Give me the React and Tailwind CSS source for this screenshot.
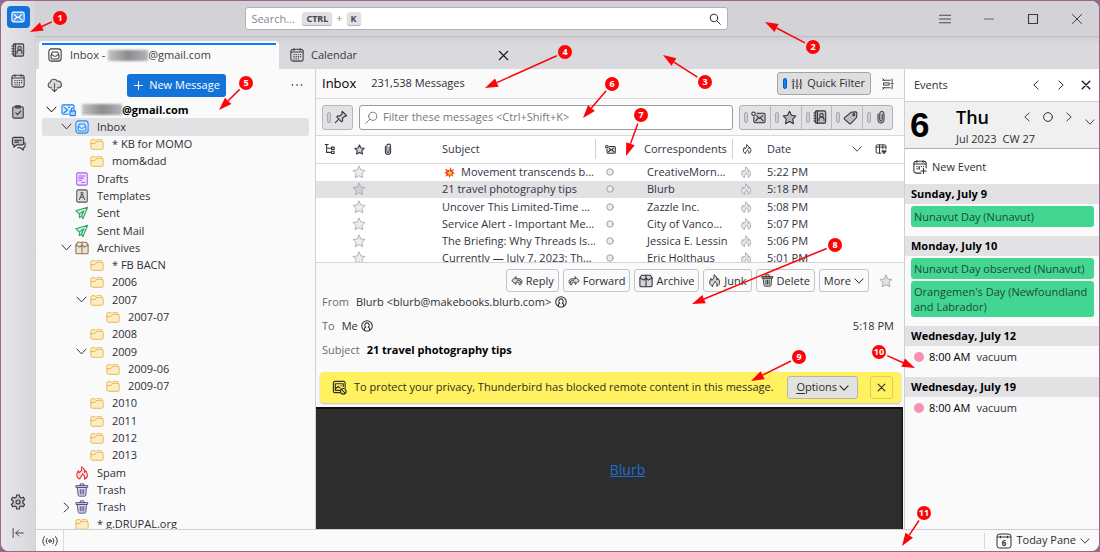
import React from 'react';
import clsx from 'clsx';

const Svg = ({ className = 'size-[14px]', sw = 1, children }) => (
  <svg
    viewBox="0 0 16 16"
    className={clsx('shrink-0', className)}
    fill="none"
    stroke="currentColor"
    strokeWidth={sw}
    strokeLinecap="round"
    strokeLinejoin="round"
    aria-hidden="true"
  >
    {children}
  </svg>
);

const Chevron = ({ dir = 'down', className = 'size-3', sw = 1.4 }) => {
  const paths = {
    down: 'M1.500 4.500L8 11.500l6.500-7',
    right: 'M4.500 1.500L11.500 8l-7 6.500',
    left: 'M11.500 1.500L4.500 8l7 6.500',
  };
  return (
    <Svg className={className} sw={sw}>
      <path d={paths[dir]} />
    </Svg>
  );
};

const Cross = ({ className = 'size-3', sw = 1.6 }) => (
  <Svg className={className} sw={sw}>
    <path d="M2 2l12 12M14 2L2 14" />
  </Svg>
);

const MailIcon = ({ className }) => (
  <Svg className={className} sw={1.3}>
    <rect x="1" y="2.5" width="14" height="11" rx="2" fill="#4a96f0" />
    <path d="M3.5 5l3.7 3.3a1.2 1.2 0 0 0 1.6 0L12.500 5M3.500 11.500L6.500 8.500M12.500 11.500L9.500 8.500" />
  </Svg>
);

const ContactsIcon = ({ className }) => (
  <Svg className={className} sw={1.200}>
    <rect x="2.5" y="1" width="12" height="14" rx="1.5" fill="currentColor" fillOpacity=".18" />
    <path d="M1 3.500h2.500M1 6.500h2.500M1 9.500h2.500M1 12.500h2.500M5 1v14" />
    <circle cx="9.700" cy="6" r="2" />
    <path d="M6.800 12v-1.200a2.900 2.900 0 0 1 5.800 0V12" />
  </Svg>
);

const CalendarIcon = ({ className }) => (
  <Svg className={className} sw={1.200}>
    <rect x="1" y="1.500" width="14" height="13.500" rx="2.500" />
    <path d="M1.500 4.500h13M4.500 .8v2M11.500 .8v2" />
    <path d="M4.500 7.500h.1M7 7.500h.1M9.500 7.500h.1M12 7.500h.1M4.500 10h.1M7 10h.1M9.500 10h.1M12 10h.1M4.500 12.500h.1M7 12.500h.1M9.500 12.500h.1" strokeWidth="1.500" />
  </Svg>
);

const NewEventIcon = () => (
  <Svg sw={1.200}>
    <path d="M9 15H3.500A2.500 2.500 0 0 1 1 12.500V4A2.500 2.500 0 0 1 3.500 1.500h9A2.500 2.500 0 0 1 15 4v5" />
    <path d="M1.500 4.500h13M4.500 .8v2M11.500 .8v2M12 9.500v6M9 12.500h6" />
    <path d="M4.500 7.500h.1M7 7.500v3M9.500 7.500h.1M4.500 10h.1M12 7.500h.1" strokeWidth="1.500" />
  </Svg>
);

const TasksIcon = ({ className }) => (
  <Svg className={className} sw={1.200}>
    <rect x="2" y="2" width="12" height="13" rx="1.500" fill="currentColor" fillOpacity=".22" />
    <path d="M5.500 1h5v2.500h-5z" fill="currentColor" fillOpacity=".3" />
    <path d="M5.500 9l2 2 3.500-4" strokeWidth="1.400" />
  </Svg>
);

const ChatIcon = ({ className }) => (
  <Svg className={className} sw={1.200}>
    <path d="M3 1.500h9A1.500 1.500 0 0 1 13.500 3v5A1.500 1.500 0 0 1 12 9.500H6L3 12V9.500A1.500 1.500 0 0 1 1.500 8V3A1.500 1.500 0 0 1 3 1.500z" fill="currentColor" fillOpacity=".22" />
    <path d="M4 4.500h7M4 6.500h4M15 7v4a1.500 1.500 0 0 1-1.500 1.500H13V15l-3-2.500H7" />
  </Svg>
);

const GearIcon = ({ className }) => (
  <Svg className={className} sw={1.200}>
    <path
      d="M6.700 1h2.600l.5 2.200 1.300.8 2.200-.8 1.300 2.300-1.700 1.500v2l1.700 1.500-1.300 2.300-2.200-.8-1.300.8-.5 2.200H6.700l-.5-2.200-1.300-.8-2.200.8-1.300-2.300L3.100 9V7L1.400 5.500l1.300-2.300 2.200.8 1.300-.8z"
      fill="currentColor"
      fillOpacity=".15"
    />
    <circle cx="8" cy="8" r="2" />
  </Svg>
);

const CollapseIcon = ({ className }) => (
  <Svg className={className} sw={1.200}>
    <path d="M1.500 2v12M15 8H5M9 4L5 8l4 4" />
  </Svg>
);

const InboxIcon = ({ className, fill = 'none' }) => (
  <Svg className={className} sw={1.200}>
    <rect x="1" y="1" width="14" height="14" rx="3" fill={fill} />
    <path d="M3.500 8.500L5 4.500h6l1.500 4V11a1.500 1.500 0 0 1-1.500 1.500H5A1.500 1.500 0 0 1 3.500 11zM3.500 8H5.500c.4 2 4.600 2 5 0h2" />
  </Svg>
);

const FolderIcon = () => (
  <Svg className="size-[14px] text-[#e8b13c]">
    <path d="M1 4.500A1.500 1.500 0 0 1 2.500 3H5.500L7.500 5H13.500A1.500 1.500 0 0 1 15 6.500V12.500A1.500 1.500 0 0 1 13.500 14H2.500A1.500 1.500 0 0 1 1 12.500z" fill="#fbeec6" />
    <path d="M1 7.500H5.500L7.500 5M8 3h4.500A1.500 1.500 0 0 1 14 4.500" />
  </Svg>
);

const DraftsIcon = () => (
  <Svg className="size-[14px] text-[#a45cf0]" sw={1.200}>
    <rect x="2" y="1" width="12" height="14" rx="1.500" fill="#f0dfff" />
    <path d="M4.500 4.500h7M4.500 7h5M4.500 9.500h3M8 12h3" />
  </Svg>
);

const TemplatesIcon = () => (
  <Svg className="size-[14px] text-[#55555d]" sw={1.200}>
    <rect x="2" y="1" width="12" height="14" rx="1.500" fill="#dcdce0" />
    <circle cx="8" cy="5" r="1.200" />
    <path d="M7.500 6.500L5 12M8.500 6.500L11 12M6 9.500h4" />
  </Svg>
);

const SentIcon = () => (
  <Svg className="size-[14px] text-[#2ba55e]" sw={1.200}>
    <path d="M14.500 1.500L1 5.500 5 9v4.500l2.500-2 1.500 3z" fill="#c9f0d8" />
    <path d="M5 9l5-3.500L7.500 11.500" />
  </Svg>
);

const ArchiveIcon = ({ className, fill = '#ece2d6' }) => (
  <Svg className={className} sw={1.200}>
    <path d="M3 1.500h10l2 3V13a1.500 1.500 0 0 1-1.500 1.500h-11A1.500 1.500 0 0 1 1 13V4.500z" fill={fill} />
    <path d="M1 4.500l4.500 2.500L8 4.500 10.500 7 15 4.500M8 1.500v3M8 4.500V14" />
  </Svg>
);

const FlameIcon = ({ className, fill = 'none', sw = 1.200 }) => (
  <Svg className={className} sw={sw}>
    <path
      d="M5.500 15C3 14 2 12 2 10c0-2 1.200-3 1.800-4.500.6.700.8 1.300.8 2.200C6.700 6.500 8.300 4 7.300 1c3 1.500 4 4 3.700 6.500.7-.5 1-1.300 1-2.300 1.600 1.500 2.200 3.300 2.200 5C14.200 12.500 13 14.300 10.800 15c.8-2 .2-4-2.300-6 0 2.500-2.500 3-3 6z"
      fill={fill}
    />
  </Svg>
);

const TrashIcon = ({ className, fill = '#dedeee' }) => (
  <Svg className={className} sw={1.100}>
    <path d="M3 5h10l-.6 8.600a1.500 1.500 0 0 1-1.500 1.400H5.100a1.500 1.500 0 0 1-1.500-1.400z" fill={fill} />
    <path d="M1.500 3h13v2h-13zM6 3V1h4v2M6 7.500v5M8 7.500v5M10 7.500v5" />
  </Svg>
);

const AccountIcon = () => (
  <Svg className="ml-[4px] size-[15px] text-[#1d7ff0]" sw={1.200}>
    <path d="M7.500 13H2.500A1.500 1.500 0 0 1 1 11.500v-7A1.500 1.500 0 0 1 2.500 3H12.500A1.500 1.500 0 0 1 14 4.500V5.500" fill="#d9ecff" />
    <path d="M3 5.500l4 3-4 3M8 5.500h1" />
    <rect x="9.500" y="9.500" width="6" height="5" rx="1" fill="#a8d2ff" />
    <path d="M11 9.500V8a1.500 1.500 0 0 1 3 0v1.500" />
  </Svg>
);

const STAR = 'M8 1.300l2.100 4.400 4.700.6-3.400 3.400.9 4.900L8 12.300l-4.300 2.300.9-4.900L1.200 6.300l4.700-.6z';

const StarIcon = ({ className, fill = 'none', sw = 1 }) => (
  <Svg className={className} sw={sw}>
    <path d={STAR} fill={fill} />
  </Svg>
);

const ClipIcon = ({ className, sw = 1.200, fill = 'none' }) => (
  <Svg className={className} sw={sw}>
    <path d="M4.500 4.500v7a3.500 3.500 0 0 0 7 0v-7.500a2.500 2.500 0 0 0-5 0V11a1.500 1.500 0 0 0 3 0V5" fill={fill} />
  </Svg>
);

const UnreadIcon = ({ className, sw = 1.100 }) => (
  <Svg className={className} sw={sw}>
    <circle cx="2.700" cy="4" r="1.900" />
    <path d="M6.500 3.500H13.500A1.500 1.500 0 0 1 15 5v7a1.500 1.500 0 0 1-1.500 1.500h-9A1.500 1.500 0 0 1 3 12V7.500" fill="currentColor" fillOpacity=".15" />
    <path d="M6 6l3 3 3.500-3M5 11.500l2.500-2.500M13 11.500l-2.500-2.500" />
  </Svg>
);

const TagIcon = ({ className }) => (
  <Svg className={className} sw={1.100}>
    <path d="M8.500 2.500l5-.5a1.200 1.200 0 0 1 1.300 1.200l-.3 4.800-6 6.200a1.300 1.300 0 0 1-1.900 0L1.700 10a1.300 1.300 0 0 1 0-1.900z" fill="currentColor" fillOpacity=".2" />
    <circle cx="11.500" cy="5" r="1" />
  </Svg>
);

const SlidersIcon = ({ className }) => (
  <Svg className={className} sw={1.500}>
    <path d="M3 2v1M3 7v7M8 2v7M8 13v1M13 2v4M13 10v4M1.500 5h3M6.500 11h3M11.500 8h3" />
  </Svg>
);

const DisplayIcon = ({ className }) => (
  <Svg className={className} sw={1.200}>
    <path d="M1 3h10M2.500 6.500h7v3h-7zM1 13h10M1 1l2 2M1 15l2-2M13.500 1.500v4M13.500 9v5.500M12 7.200h3" />
  </Svg>
);

const SearchIcon = ({ className, flip }) => (
  <Svg className={clsx(className, flip && '-scale-x-100')} sw={1.200}>
    <circle cx="6.500" cy="6.500" r="5" />
    <path d="M10.300 10.300L15 15" />
  </Svg>
);

const PinIcon = ({ className }) => (
  <Svg className={className} sw={1.200}>
    <path d="M9.500 1.500l5 5-1.500.8-.7-.2-2.600 2.600.2 2.600-1.400 1.200L3 8l1.200-1.400 2.600.2L9.400 4.200l-.4-1.400zM5.500 10.500L1.500 14.500" fill="currentColor" fillOpacity=".15" />
  </Svg>
);

const ReplyIcon = ({ className, flip }) => (
  <Svg className={clsx(className, flip && '-scale-x-100')} sw={1.200}>
    <path d="M6.500 2.500L1 7.500l5.500 5v-3h2c1.500 0 2.500 1 2.500 3.500h1.500c1.500-1.500 2-3 2-4.500C14.500 6 12.500 5 10 5H6.500z" fill="currentColor" fillOpacity=".15" />
    <path d="M8.500 7h1.500c1.700 0 2.700 1.300 2.700 3.500" />
  </Svg>
);

const PersonIcon = ({ className }) => (
  <Svg className={className} sw={1.400}>
    <circle cx="8" cy="8" r="7" />
    <path d="M4.500 13v-1.200c0-1 .8-1.600 1.800-2C4 7.500 5.200 3.800 8 3.800s4 3.700 1.700 6c1 .4 1.800 1 1.800 2V13" />
  </Svg>
);

const BlockedIcon = ({ className }) => (
  <Svg className={className} sw={1.200}>
    <path d="M8 13.500H3A1.500 1.500 0 0 1 1.500 12V3A1.500 1.500 0 0 1 3 1.500h9.500A1.500 1.500 0 0 1 14 3v5" />
    <path d="M3.500 4h8.500v3M3.500 4v7H8M4 9l2.500-2 2 1.500M9.500 6h.1" />
    <circle cx="12" cy="12" r="3" />
    <path d="M10 10l4 4" />
  </Svg>
);

const ThreadIcon = ({ className }) => (
  <Svg className={className} sw={1.400}>
    <path d="M1.500 2h4M3.500 2v10.500h6M3.500 7h6" />
    <rect x="10" y="5.500" width="3.500" height="3" />
    <rect x="10" y="11" width="3.500" height="3" />
  </Svg>
);

const ColumnsIcon = ({ className }) => (
  <Svg className={className} sw={1.300}>
    <path d="M8 13.500H3A1.500 1.500 0 0 1 1.500 12V4A1.500 1.500 0 0 1 3 2.500H13A1.500 1.500 0 0 1 14.500 4V8M1.500 5.500h13M6 2.500v11M10.500 2.500V8" />
    <path d="M9.500 10.500h5.500l-2.700 3.500z" fill="currentColor" />
  </Svg>
);

const CloudIcon = ({ className }) => (
  <Svg className={className} sw={1.200}>
    <path d="M5 10.500H4A3 3 0 0 1 3.500 4.600 4 4 0 0 1 11 3.500a3.300 3.300 0 0 1 1.500 7H11" fill="currentColor" fillOpacity=".2" />
    <path d="M8 6v8.500M5.500 12L8 14.500 10.500 12" />
  </Svg>
);

const BurstIcon = ({ className }) => (
  <Svg className={className} sw={0}>
    <path d="M8 4.500L10 0l.8 4.800L15 3l-2.500 4L16 9l-4 1 2 4-4.200-2L8 16l-1.500-4L2 14l1.700-4L0 8.500 3.800 7 1 2.500l4.500 2z" fill="#f0401e" />
    <path d="M8 5l1.200 2L12 7.500 10.500 9l.5 2.500L8.500 10.500 6.500 12l.2-2.500L4.500 8l2.400-.8z" fill="#ffd23c" />
  </Svg>
);

const SignalIcon = ({ className }) => (
  <svg viewBox="0 0 20 14" className={clsx('shrink-0', className)} fill="none" stroke="currentColor" strokeWidth="1.200" strokeLinecap="round" aria-hidden="true">
    <circle cx="10" cy="7" r="1.600" />
    <path d="M6.500 3.500a5 5 0 0 0 0 7M13.500 3.500a5 5 0 0 1 0 7M3 1.500a9 9 0 0 0 0 11M17 1.500a9 9 0 0 1 0 11" />
  </svg>
);

const folders = [
  { name: 'Inbox', depth: 1, icon: 'inbox', open: true, selected: true },
  { name: '* KB for MOMO', depth: 2 },
  { name: 'mom&dad', depth: 2 },
  { name: 'Drafts', depth: 1, icon: 'drafts' },
  { name: 'Templates', depth: 1, icon: 'templates' },
  { name: 'Sent', depth: 1, icon: 'sent' },
  { name: 'Sent Mail', depth: 1, icon: 'sent' },
  { name: 'Archives', depth: 1, icon: 'archive', open: true },
  { name: '* FB BACN', depth: 2 },
  { name: '2006', depth: 2 },
  { name: '2007', depth: 2, open: true },
  { name: '2007-07', depth: 3 },
  { name: '2008', depth: 2 },
  { name: '2009', depth: 2, open: true },
  { name: '2009-06', depth: 3 },
  { name: '2009-07', depth: 3 },
  { name: '2010', depth: 2 },
  { name: '2011', depth: 2 },
  { name: '2012', depth: 2 },
  { name: '2013', depth: 2 },
  { name: 'Spam', depth: 1, icon: 'spam' },
  { name: 'Trash', depth: 1, icon: 'trash' },
  { name: 'Trash', depth: 1, icon: 'trash', open: false },
  { name: '* g.DRUPAL.org', depth: 1 },
];

const indents = ['pl-[5px]', 'pl-[19px]', 'pl-[34px]', 'pl-[50px]'];

const messages = [
  { subject: 'Movement transcends b...', from: 'CreativeMorn...', time: '5:22 PM', burst: true },
  { subject: '21 travel photography tips', from: 'Blurb', time: '5:18 PM', selected: true },
  { subject: 'Uncover This Limited-Time ...', from: 'Zazzle Inc.', time: '5:08 PM' },
  { subject: 'Service Alert - Important Me...', from: 'City of Vanco...', time: '5:07 PM' },
  { subject: 'The Briefing: Why Threads Is...', from: 'Jessica E. Lessin', time: '5:06 PM' },
  { subject: 'Currently — July 7, 2023: Th...', from: 'Eric Holthaus', time: '5:01 PM' },
];

const agenda = [
  { day: 'Sunday, July 9', allDay: ['Nunavut Day (Nunavut)'] },
  { day: 'Monday, July 10', allDay: ['Nunavut Day observed (Nunavut)', "Orangemen's Day (Newfoundland and Labrador)"] },
  { day: 'Wednesday, July 12', time: '8:00 AM', title: 'vacuum' },
  { day: 'Wednesday, July 19', time: '8:00 AM', title: 'vacuum' },
];

const callouts = [
  { n: 1, x: 60, y: 18, tx: 30, ty: 32 },
  { n: 2, x: 813, y: 47, tx: 765, ty: 22 },
  { n: 3, x: 705, y: 82, tx: 663, ty: 55 },
  { n: 4, x: 565, y: 52, tx: 485, ty: 88 },
  { n: 5, x: 246, y: 83, tx: 219, ty: 110 },
  { n: 6, x: 612, y: 84, tx: 583, ty: 118 },
  { n: 7, x: 641, y: 115, tx: 626, ty: 156 },
  { n: 8, x: 835, y: 245, tx: 692, ty: 304 },
  { n: 9, x: 799, y: 357, tx: 751, ty: 381 },
  { n: 10, x: 879, y: 352, tx: 915, ty: 368 },
  { n: 11, x: 924, y: 513, tx: 902, ty: 546 },
];

const FolderTypeIcon = ({ type }) => {
  switch (type) {
    case 'inbox':
      return <InboxIcon className="size-[14px] text-[#2a86e8]" fill="#cfe6ff" />;
    case 'drafts':
      return <DraftsIcon />;
    case 'templates':
      return <TemplatesIcon />;
    case 'sent':
      return <SentIcon />;
    case 'archive':
      return <ArchiveIcon className="size-[14px] text-[#8f7355]" />;
    case 'spam':
      return <FlameIcon className="size-[14px] text-[#e0303a]" fill="#ffdada" />;
    case 'trash':
      return <TrashIcon className="size-[14px] text-[#4c4c80]" />;
    default:
      return <FolderIcon />;
  }
};

const Redacted = ({ className }) => (
  <span
    className={clsx('inline-block h-[11px] bg-gradient-to-r from-[#c4c4c6] via-[#8c8c90] to-[#b4b4b8] blur-[1px]', className)}
  />
);

const SpacesRail = () => (
  <nav aria-label="Spaces" className="flex w-[35px] shrink-0 flex-col items-center border-r border-[#cfcfd3] bg-gradient-to-r from-[#e6e6e8] to-[#d8d8da] pt-[5px] pb-2 text-[#3a3a40]">
    <button aria-label="Mail" className="flex h-[22px] w-[23px] items-center justify-center rounded bg-[#1373d9] text-white">
      <MailIcon />
    </button>
    <div className="flex flex-col gap-[17px] pt-[15px]">
      <button aria-label="Address Book" className="block"><ContactsIcon /></button>
      <button aria-label="Calendar" className="block"><CalendarIcon /></button>
      <button aria-label="Tasks" className="block"><TasksIcon /></button>
      <button aria-label="Chat" className="block"><ChatIcon className="size-[15px]" /></button>
    </div>
    <div className="mt-auto flex flex-col items-center gap-[17px] pb-1">
      <button aria-label="Settings" className="block"><GearIcon className="size-4" /></button>
      <button aria-label="Collapse" className="block"><CollapseIcon className="size-3" /></button>
    </div>
  </nav>
);

const TitleBar = () => (
  <header className="flex h-9 shrink-0 items-center border-b border-[#bdbcc1] bg-[#d3d2d7] pr-4 text-[#3a3a40]">
    <div className="ml-[20%] flex h-[23px] w-[483px] items-center rounded-[3px] border border-[#b0b0b6] bg-white pr-1.5 pl-[5px]">
      <div className="relative flex flex-1 items-center">
        <input type="search" aria-label="Search" placeholder="Search..." className="w-full text-[11px] leading-5 outline-none placeholder:text-[#85858c]" />
        <div className="pointer-events-none absolute inset-y-0 left-[51px] flex items-center gap-1 text-[11px] text-[#85858c]">
          <kbd className="flex h-[13px] items-center rounded-[3px] bg-[#e0e0e4] px-1 font-[Noto_Sans] text-[9px] font-bold text-[#45454c] shadow-[0_1px_1px_#b0b0b6]">CTRL</kbd>
          <span>+</span>
          <kbd className="flex h-[13px] items-center rounded-[3px] bg-[#e0e0e4] px-1 font-[Noto_Sans] text-[9px] font-bold text-[#45454c] shadow-[0_1px_1px_#b0b0b6]">K</kbd>
        </div>
      </div>
      <button aria-label="Run search" className="text-[#15141a]"><SearchIcon className="size-3" /></button>
    </div>
    <div className="ml-auto flex items-center gap-8">
      <button aria-label="Menu"><Svg className="size-3" sw={1.200}><path d="M0 3h16M0 8h16M0 13h16" /></Svg></button>
      <button aria-label="Minimize"><Svg className="size-3"><path d="M2 8h12" /></Svg></button>
      <button aria-label="Maximize"><Svg className="size-3" sw={1.500}><rect x="2" y="2" width="12" height="12" /></Svg></button>
      <button aria-label="Close"><Cross sw={1.300} /></button>
    </div>
  </header>
);

const TabBar = () => (
  <div role="tablist" className="flex h-8 shrink-0 bg-gradient-to-b from-[#d0cfd4] via-[#dad9de] via-25% to-[#dad9de] pl-[3px] text-[11px] text-[#3a3a40]">
    <button role="tab" aria-selected="true" className="relative mt-1 flex w-60 items-center gap-2 rounded-t bg-[#fafafa] px-[9px]">
      <span className="absolute inset-x-[3px] top-[2px] h-[2px] bg-[#0a7cff]" />
      <InboxIcon />
      <span className="flex items-center whitespace-nowrap">
        Inbox -&nbsp;<Redacted className="w-[40px]" />@gmail.com
      </span>
    </button>
    <div className="mt-1 flex w-60 items-center justify-between pr-2.5 pl-[11px]">
      <button role="tab" aria-selected="false" className="flex items-center gap-[7px]">
        <CalendarIcon />
        Calendar
      </button>
      <button aria-label="Close tab" className="text-[#15141a]"><Cross className="size-[11px]" sw={2} /></button>
    </div>
  </div>
);

const FolderRow = ({ folder }) => (
  <li className={clsx('mx-1.5 flex items-center rounded-[3px]', indents[folder.depth], folder.selected && 'bg-[#e2e2e5]')}>
    <span className="flex w-[14px] shrink-0 justify-start">
      {folder.open !== undefined && <Chevron dir={folder.open ? 'down' : 'right'} className="size-[11px]" />}
    </span>
    <FolderTypeIcon type={folder.icon} />
    <span className="pl-2 whitespace-nowrap">{folder.name}</span>
  </li>
);

const FolderPane = () => (
  <aside className="flex w-[280px] shrink-0 flex-col overflow-hidden border-r border-[#d0d0d4] bg-[#fafafa]">
    <div className="flex h-8 shrink-0 items-center justify-between pr-3 pl-[11px]">
      <button aria-label="Get Messages" className="text-[#55555c]"><CloudIcon className="size-[15px]" /></button>
      <button className="flex h-[23px] items-center gap-[5px] rounded-[3px] bg-[#1373d9] px-1.5 text-[11px] font-medium text-white">
        <Svg className="size-[11px]" sw={1.400}><path d="M8 2v12M2 8h12" /></Svg>
        New Message
      </button>
      <button aria-label="Folder pane options" className="text-[#15141a]">
        <Svg className="size-3"><path d="M2 8h.1M8 8h.1M14 8h.1" strokeWidth="2" /></Svg>
      </button>
    </div>
    <ul className="-mb-1 grid flex-1 auto-rows-fr text-[11px] leading-4 text-[#2e2e34]">
      <li className="mx-1.5 flex items-center pl-[4px] font-bold text-black">
        <Chevron className="size-[11px]" />
        <AccountIcon />
        <span className="flex items-center pl-[6px]">
          <Redacted className="w-[40px]" />@gmail.com
        </span>
      </li>
      {folders.map((folder, i) => (
        <FolderRow key={i} folder={folder} />
      ))}
    </ul>
  </aside>
);

const filters = [
  { label: 'Unread', icon: <UnreadIcon className="size-[15px]" /> },
  { label: 'Starred', icon: <StarIcon className="size-[15px]" fill="#b8b8bc" sw={1.100} /> },
  { label: 'Contact', icon: <ContactsIcon /> },
  { label: 'Tags', icon: <TagIcon className="size-[15px]" /> },
  { label: 'Attachment', icon: <ClipIcon fill="#b8b8bc" sw={1} /> },
];

const Toggle = ({ on }) => (
  <span className={clsx('h-[11px] w-1 shrink-0 rounded-full border', on ? 'border-[#0a5cc0] bg-[#0a84ff]' : 'border-[#a8a8ae] bg-[#cfcfd3]')} />
);

const FilterBar = () => (
  <div className="flex h-[37px] shrink-0 items-center gap-1.5 border-b border-[#d9d9dc] bg-[#f9f9fa] pr-[11px] pl-1.5 text-[#2e2e34]">
    <button aria-label="Keep filters" className="flex h-[25px] w-[31px] items-center justify-center gap-[3px] rounded-[3px] border border-[#b6b6bb] bg-[#e2e2e5]">
      <Toggle />
      <PinIcon />
    </button>
    <div className="flex h-[25px] flex-1 items-center gap-[5px] rounded-[3px] border border-[#9a9aa0] bg-white px-[5px]">
      <SearchIcon className="size-[13px] text-[#77777e]" flip />
      <input type="search" aria-label="Filter these messages" placeholder="Filter these messages <Ctrl+Shift+K>" className="w-full text-[11px] outline-none placeholder:text-[#77777e]" />
    </div>
    <div className="grid h-[25px] w-[154px] grid-cols-5 overflow-hidden rounded-[3px] border border-[#b0b0ba] bg-[#e2e2e5]">
      {filters.map(({ label, icon }, i) => (
        <button key={label} aria-label={label} className={clsx('flex items-center justify-center gap-[3px]', i > 0 && 'border-l border-[#b8b8c2]')}>
          <Toggle />
          {icon}
        </button>
      ))}
    </div>
  </div>
);

const ThreadTable = () => (
  <div className="h-[127px] shrink-0 overflow-hidden border-b border-[#d4d4d8] bg-white">
    <table className="h-[131px] w-full table-fixed border-collapse text-left text-[11px] leading-4 text-[#33323f]">
      <colgroup>
        <col className="w-7" />
        <col className="w-[30px]" />
        <col className="w-7" />
        <col />
        <col className="w-[29px]" />
        <col className="w-[108px]" />
        <col className="w-7" />
        <col className="w-[108px]" />
        <col className="w-9" />
      </colgroup>
      <thead>
        <tr className="h-[27px] border-b border-[#d9d9dc]">
          <th aria-label="Thread"><ThreadIcon className="mx-auto size-3" /></th>
          <th aria-label="Starred"><StarIcon className="mx-auto size-[11px]" fill="#d0d0d6" sw={1.500} /></th>
          <th aria-label="Attachments"><ClipIcon className="mx-auto size-3" sw={1.400} /></th>
          <th className="pl-10 font-normal">Subject</th>
          <th aria-label="Read"><div className="flex h-5 items-center justify-center border-l border-[#d0d0d4]"><UnreadIcon className="size-[11px]" sw={1.500} /></div></th>
          <th className="pl-5 font-normal">Correspondents</th>
          <th aria-label="Junk"><div className="flex h-5 items-center justify-center border-l border-[#d0d0d4]"><FlameIcon className="size-[10px]" sw={1.600} /></div></th>
          <th className="pl-[7px] font-normal"><span className="flex items-center justify-between pr-1.5">Date<Chevron className="size-[10px]" /></span></th>
          <th aria-label="Select columns"><ColumnsIcon className="ml-[7px] size-3" /></th>
        </tr>
      </thead>
      <tbody>
        {messages.map((msg) => (
          <tr key={msg.subject} className={clsx(msg.selected && 'bg-[#e2e2e5]')}>
            <td />
            <td><StarIcon className="mx-auto size-[14px] text-[#a8a8b0]" fill={msg.selected ? '#cfcfd4' : '#eeeef0'} /></td>
            <td />
            <td className="overflow-hidden pl-10 whitespace-nowrap">
              <span className="flex items-center">
                {msg.burst && <BurstIcon className="mr-1.5 ml-0.5 size-[11px]" />}
                {msg.subject}
              </span>
            </td>
            <td><Svg className="mx-auto size-2 text-[#a0a0a8]" sw={2}><circle cx="8" cy="8" r="6.500" fill="#ececef" /></Svg></td>
            <td className="overflow-hidden pl-[23px] whitespace-nowrap">{msg.from}</td>
            <td><FlameIcon className="mx-auto size-3 text-[#a8a8b0]" fill="#e6e6ea" /></td>
            <td className="pl-[7px]">{msg.time}</td>
            <td />
          </tr>
        ))}
      </tbody>
    </table>
  </div>
);

const actions = [
  { label: 'Reply', icon: <ReplyIcon className="size-3" /> },
  { label: 'Forward', icon: <ReplyIcon className="size-3" flip /> },
  { label: 'Archive', icon: <ArchiveIcon fill="#d4d4d8" /> },
  { label: 'Junk', icon: <FlameIcon className="size-[13px]" fill="#d4d4d8" /> },
  { label: 'Delete', icon: <TrashIcon className="size-[13px]" fill="#d4d4d8" /> },
];

const MessageHeader = () => (
  <section className="shrink-0 bg-[#fafafa] px-1.5 pt-1.5 text-[11px] leading-4 text-[#2e2e34]">
    <div className="flex items-center justify-end gap-1 pr-[5px]">
      {actions.map(({ label, icon }) => (
        <button key={label} className="flex h-[23px] items-center gap-[3px] rounded-[3px] border border-[#c4c4c9] px-[4px]">
          {icon}
          {label}
        </button>
      ))}
      <button className="flex h-[23px] items-center gap-[3px] rounded-[3px] border border-[#c4c4c9] px-[4px]">
        More
        <Chevron className="size-[10px]" sw={1.600} />
      </button>
      <button aria-label="Star message" className="ml-1.5 text-[#a0a0a6]"><StarIcon fill="#e2e2e5" /></button>
    </div>
    <div className="mt-[2px] flex items-center">
      <span className="text-[#6a6a72]">From</span>
      <span className="pl-[7px]">Blurb &lt;blurb@makebooks.blurb.com&gt;</span>
      <PersonIcon className="ml-1 size-3" />
    </div>
    <div className="mt-2 flex items-center">
      <span className="text-[#6a6a72]">To</span>
      <span className="pl-[7px]">Me</span>
      <PersonIcon className="ml-[3px] size-3" />
      <time className="ml-auto pr-1">5:18 PM</time>
    </div>
    <div className="mt-2 flex items-center">
      <span className="text-[#6a6a72]">Subject</span>
      <span className="pl-[7px] font-bold text-black">21 travel photography tips</span>
    </div>
  </section>
);

const PrivacyNotice = () => (
  <div className="mt-[14px] mr-[3px] mb-1 ml-1 flex h-[31px] shrink-0 items-center rounded bg-[#fff160] pr-2 pl-3 text-[11px] text-[#2e2e22] shadow-[0_1px_2px_#bbbbbb]">
    <BlockedIcon className="size-[15px]" />
    <p className="pl-[7px] whitespace-nowrap">To protect your privacy, Thunderbird has blocked remote content in this message.</p>
    <button className="ml-auto flex h-[23px] items-center gap-0.5 rounded-[3px] border border-[#b6b6a8] bg-[#e2e2e2] px-2 whitespace-nowrap">
      <span><span className="underline underline-offset-2">O</span>ptions</span>
      <Chevron className="size-[10px]" sw={1.800} />
    </button>
    <button aria-label="Dismiss" className="ml-3 flex size-[23px] items-center justify-center rounded-[3px] border border-[#dccf50]">
      <Cross className="size-[9px]" sw={2} />
    </button>
  </div>
);

const MailPane = () => (
  <main className="flex min-w-0 flex-1 flex-col bg-[#fafafa]">
    <div className="flex h-[30px] shrink-0 items-center border-b border-[#d9d9dc] pr-[10px] pl-1.5 text-[#2e2e34]">
      <h1 className="text-[13px] font-medium text-black">Inbox</h1>
      <span className="pl-[15px] text-[11px]">231,538 Messages</span>
      <button aria-pressed="true" className="ml-auto flex h-[23px] items-center gap-1 rounded-[3px] border border-[#a4a4a9] bg-[#dededf] px-[5px] text-[11px]">
        <Toggle on />
        <SlidersIcon className="size-3" />
        Quick Filter
      </button>
      <button aria-label="Display options" className="ml-[11px]"><DisplayIcon className="size-3" /></button>
    </div>
    <FilterBar />
    <ThreadTable />
    <MessageHeader />
    <PrivacyNotice />
    <article className="mr-px flex flex-1 items-center justify-center border-t-2 border-r border-[#0c0c0c] bg-[#2d2d2d]">
      <a href="#blurb" className="mr-[-37px] text-[14px] text-[#1a6fd6] underline">Blurb</a>
    </article>
  </main>
);

const TodayPane = () => (
  <aside className="flex w-[195px] shrink-0 flex-col border-l border-[#d0d0d4] bg-[#fafafa] text-[11px] leading-4 text-[#2e2e34]">
    <div className="flex h-[33px] items-center border-b border-[#cfcfd3] bg-white pr-2 pl-[9px]">
      <h2>Events</h2>
      <div className="ml-auto flex items-center gap-[15px] text-[#15141a]">
        <button aria-label="Previous"><Chevron dir="left" className="size-[10px]" /></button>
        <button aria-label="Next"><Chevron dir="right" className="size-[10px]" /></button>
        <button aria-label="Close Today Pane"><Cross className="size-[10px]" sw={2.200} /></button>
      </div>
    </div>
    <div className="flex h-[47px] items-start border-b border-[#b0b0b4] bg-[#f0f0f0] pl-[5px]">
      <span className="w-[46px] pt-[5px] font-[Liberation_Sans] text-[35px] leading-9 font-bold text-black">6</span>
      <div className="flex-1 pt-[5px]">
        <div className="flex items-center">
          <span className="text-[18px] leading-5 font-semibold text-black">Thu</span>
          <div className="ml-auto flex items-center gap-[11px] pr-1">
            <button aria-label="Previous day"><Chevron dir="left" className="size-[10px]" /></button>
            <button aria-label="Today"><Svg className="size-[10px]" sw={1.600}><circle cx="8" cy="8" r="7" /></Svg></button>
            <button aria-label="Next day"><Chevron dir="right" className="size-[10px]" /></button>
            <button aria-label="Show month" className="pt-2.5"><Chevron className="size-[10px]" /></button>
          </div>
        </div>
        <div className="flex gap-1.5 pt-1 whitespace-nowrap"><span>Jul 2023</span><span>CW 27</span></div>
      </div>
    </div>
    <button className="flex h-[35px] items-center gap-[5px] bg-white pl-2">
      <NewEventIcon />
      New Event
    </button>
    {agenda.map((entry) => (
      <section key={entry.day} className="pb-[9px]">
        <h3 className="bg-[#e2e2e5] px-1.5 text-[11px] leading-5 font-bold text-black">{entry.day}</h3>
        {entry.allDay ? (
          <ul className="flex flex-col gap-0.5 pt-0.5 pr-[5px] pl-1.5">
            {entry.allDay.map((title) => (
              <li key={title} className="rounded-[3px] bg-[#42d692] px-[3px] py-[3px] leading-[15px] text-[#1d4a35]">{title}</li>
            ))}
          </ul>
        ) : (
          <p className="flex items-center py-[3px] pl-[9px]">
            <span className="size-[10px] rounded-full bg-[#f691b2]" />
            <span className="pl-[5px] font-medium text-black">{entry.time}</span>
            <span className="pl-1.5">{entry.title}</span>
          </p>
        )}
      </section>
    ))}
  </aside>
);

const StatusBar = () => (
  <footer className="flex h-[22px] shrink-0 items-center border-t border-[#d0d0d4] bg-[#fafafa] text-[11px] text-[#2e2e34]">
    <div className="flex h-full w-7 items-center justify-center border-r border-[#d9d9dc]">
      <SignalIcon className="h-3 w-4" />
    </div>
    <button className="ml-auto flex h-4 items-center gap-1 border-l border-[#d9d9dc] pr-[9px] pl-[11px]">
      <svg viewBox="0 0 16 16" className="size-4" fill="none" stroke="currentColor" aria-hidden="true">
        <rect x="1" y="1" width="14" height="14" rx="2.500" />
        <path d="M1 4h14M4.500 2.800v2.400M11.500 2.800v2.400" />
        <text x="8" y="13" textAnchor="middle" fontSize="8" fontWeight="700" fill="currentColor" stroke="none">6</text>
      </svg>
      Today Pane
      <Chevron className="size-[10px]" />
    </button>
  </footer>
);

const Callouts = () => (
  <svg className="pointer-events-none absolute inset-0 h-full w-full">
    {callouts.map(({ n, x, y, tx, ty }) => {
      const len = Math.hypot(tx - x, ty - y);
      const ux = (tx - x) / len;
      const uy = (ty - y) / len;
      const bx = tx - ux * 13;
      const by = ty - uy * 13;
      return (
        <g key={n} fill="#fb0508">
          <line x1={x + ux * 9} y1={y + uy * 9} x2={bx} y2={by} stroke="#fb0508" strokeWidth="1.500" />
          <polygon points={`${tx},${ty} ${bx - uy * 4.5},${by + ux * 4.5} ${bx + uy * 4.5},${by - ux * 4.5}`} />
          <circle cx={x} cy={y} r="7" />
          <text x={x} y={y + 3} textAnchor="middle" fontSize="9" fontWeight="700" fill="#ffffff">{n}</text>
        </g>
      );
    })}
  </svg>
);

const App = () => (
  <div className="relative h-screen overflow-hidden bg-[#94698a] p-px font-['Open_Sans','Noto_Sans',sans-serif]">
    <div className="flex h-full overflow-hidden rounded-lg bg-[#fafafa]">
      <SpacesRail />
      <div className="flex min-w-0 flex-1 flex-col">
        <TitleBar />
        <TabBar />
        <div className="flex min-h-0 flex-1">
          <FolderPane />
          <MailPane />
          <TodayPane />
        </div>
        <StatusBar />
      </div>
    </div>
    <Callouts />
  </div>
);

export default App;
